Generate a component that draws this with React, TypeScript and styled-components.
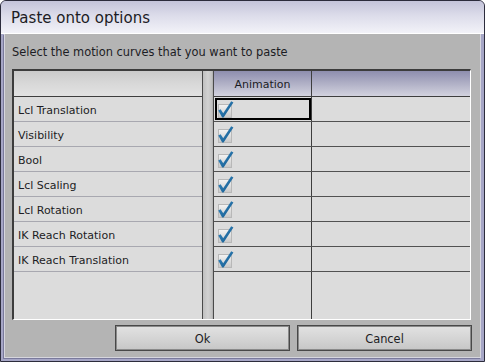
import React from "react";
import styled, { createGlobalStyle } from "styled-components";

const GlobalStyle = createGlobalStyle`
  html, body {
    margin: 0;
    padding: 0;
    background: #ffffff;
  }
  * {
    box-sizing: border-box;
  }
`;

const curves = [
  "Lcl Translation",
  "Visibility",
  "Bool",
  "Lcl Scaling",
  "Lcl Rotation",
  "IK Reach Rotation",
  "IK Reach Translation",
];

const WindowFrame = styled.div`
  width: 485px;
  height: 362px;
  display: flex;
  flex-direction: column;
  background: #a6a6c6;
  border: 1px solid #2c2c3c;
  border-radius: 6px 6px 0 0;
  padding: 0 3px 3px 3px;
  font-family: "DejaVu Sans", "Liberation Sans", sans-serif;
  color: #1c1c24;
`;

const TitleBar = styled.div`
  height: 33px;
  margin: 0 -3px;
  padding: 2px 10px 0;
  display: flex;
  align-items: center;
  font-size: 15px;
  border-radius: 5px 5px 0 0;
  background: linear-gradient(#c4c4da 0%, #dcdcea 45%, #f2f2f8 100%);
  border-bottom: 1px solid #ffffff;
`;

const Body = styled.div`
  flex: 1;
  display: flex;
  flex-direction: column;
  background: #b4b4b4;
  border: 1px solid #d6d6de;
  border-top: none;
  box-shadow: -1px 1px 0 #7a7a9c;
`;

const Prompt = styled.div`
  height: 35px;
  padding: 1px 7px 0;
  display: flex;
  align-items: center;
  font-size: 11.4px;
`;

const GridBox = styled.div`
  height: 251px;
  margin: 0 9px 0 7px;
  display: flex;
  border-top: 2px solid #3c3c3c;
  border-left: 2px solid #3c3c3c;
  border-right: 1px solid #ffffff;
  border-bottom: 1px solid #ffffff;
  background: #dcdcdc;
`;

const Pane = styled.div<{ $width?: number }>`
  display: flex;
  flex-direction: column;
  ${({ $width }) => ($width ? `width: ${$width}px;` : "flex: 1;")}
`;

const Splitter = styled.div`
  width: 12px;
  background: linear-gradient(90deg, #c0c0c0, #d2d2d2 50%, #bcbcbc);
  border-left: 1px solid #4a4a4a;
  border-right: 1px solid #4a4a4a;
  box-shadow: inset -1px 0 0 #b4b4b4;
`;

const HeaderRow = styled.div<{ $tint?: boolean }>`
  height: 26px;
  display: flex;
  border-bottom: 1px solid #3e3e3e;
  background: ${({ $tint }) =>
    $tint
      ? "linear-gradient(#8e8eae, #b0b0c6 50%, #d2d2de)"
      : "linear-gradient(#cacaca, #d8d8d8 50%, #e2e2e2)"};
`;

const HeaderCell = styled.div<{ $width?: number }>`
  display: flex;
  align-items: center;
  justify-content: center;
  padding-top: 1px;
  font-size: 11px;
  ${({ $width }) =>
    $width ? `width: ${$width}px; border-right: 1px solid #3e3e3e;` : "flex: 1;"}
`;

const Row = styled.div<{ $dark?: boolean }>`
  height: 25px;
  display: flex;
  border-bottom: 1px solid ${({ $dark }) => ($dark ? "#525252" : "#a8a8b0")};
`;

const LabelCell = styled.div`
  flex: 1;
  display: flex;
  align-items: center;
  padding: 2px 0 0 4px;
  font-size: 11px;
`;

const Cell = styled.div<{ $width?: number; $selected?: boolean }>`
  display: flex;
  align-items: center;
  padding-left: 3px;
  ${({ $width }) =>
    $width ? `width: ${$width}px; border-right: 1px solid #3e3e3e;` : "flex: 1;"}
  ${({ $selected }) =>
    $selected ? "outline: 2px solid #000; outline-offset: -3px;" : ""}
`;

const Filler = styled.div`
  flex: 1;
  display: flex;
`;

const FillerCol = styled.div<{ $width?: number }>`
  ${({ $width }) =>
    $width ? `width: ${$width}px; border-right: 1px solid #3e3e3e;` : "flex: 1;"}
`;

const ButtonRow = styled.div`
  display: flex;
  justify-content: flex-end;
  gap: 7px;
  padding: 5px 8px 0 0;
`;

const DialogButton = styled.button`
  width: 175px;
  height: 26px;
  border: 1px solid #484848;
  box-shadow: inset 0 0 0 1px #8a8a8a;
  background: linear-gradient(#e2e2e2, #d2d2d2 60%, #c6c6c6);
  font-family: "DejaVu Sans", "Liberation Sans", sans-serif;
  font-size: 11.4px;
  color: #1c1c24;
  padding: 1px 0 0;
`;

const CheckMark = () => (
  <svg width="17" height="19" viewBox="0 0 17 19">
    <defs>
      <linearGradient id="boxg" x1="0" y1="0" x2="0" y2="1">
        <stop offset="0" stopColor="#f4f4f4" />
        <stop offset="1" stopColor="#c8c8c8" />
      </linearGradient>
      <linearGradient id="tickg" x1="0" y1="0" x2="1" y2="1">
        <stop offset="0" stopColor="#3a8cc4" />
        <stop offset="1" stopColor="#11568a" />
      </linearGradient>
    </defs>
    <rect x="1.5" y="4.5" width="13" height="13" fill="url(#boxg)" stroke="#b8b8b8" />
    <path
      d="M1.2 10.5 L3.6 9.2 L6.2 13.2 L14.2 1.2 L16.4 2.4 L6.6 17.6 L5.2 17.6 Z"
      fill="url(#tickg)"
    />
  </svg>
);

export default function App() {
  return (
    <>
      <GlobalStyle />
      <WindowFrame>
        <TitleBar>Paste onto options</TitleBar>
        <Body>
          <Prompt>Select the motion curves that you want to paste</Prompt>
          <GridBox>
            <Pane $width={188}>
              <HeaderRow>
                <HeaderCell />
              </HeaderRow>
              {curves.map((name) => (
                <Row key={name}>
                  <LabelCell>{name}</LabelCell>
                </Row>
              ))}
              <Filler />
            </Pane>
            <Splitter />
            <Pane>
              <HeaderRow $tint>
                <HeaderCell $width={98}>Animation</HeaderCell>
                <HeaderCell />
              </HeaderRow>
              {curves.map((name, i) => (
                <Row key={name} $dark>
                  <Cell $width={98} $selected={i === 0}>
                    <CheckMark />
                  </Cell>
                  <Cell />
                </Row>
              ))}
              <Filler>
                <FillerCol $width={98} />
                <FillerCol />
              </Filler>
            </Pane>
          </GridBox>
          <ButtonRow>
            <DialogButton>Ok</DialogButton>
            <DialogButton>Cancel</DialogButton>
          </ButtonRow>
        </Body>
      </WindowFrame>
    </>
  );
}
